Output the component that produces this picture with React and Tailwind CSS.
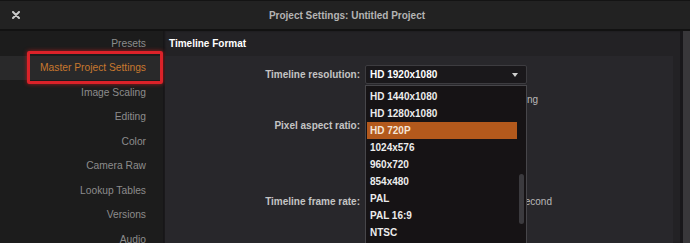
const sidebarItems = [
  'Presets',
  'Master Project Settings',
  'Image Scaling',
  'Editing',
  'Color',
  'Camera Raw',
  'Lookup Tables',
  'Versions',
  'Audio',
];

const resolutions = [
  'HD 1440x1080',
  'HD 1280x1080',
  'HD 720P',
  '1024x576',
  '960x720',
  '854x480',
  'PAL',
  'PAL 16:9',
  'NTSC',
];

const App = () => {
  const selected = 'HD 720P';

  return (
    <div className="w-[690px] h-[243px] overflow-hidden bg-[#1c1c1c] font-['Liberation_Sans',Arial,sans-serif] text-[10px] relative">
      {/* Title bar */}
      <div className="h-[31px] border-t border-[#141414] border-b-2 border-b-[#121212] bg-[#222222] flex items-center relative">
        <svg className="ml-[12px] w-[8px] h-[8px]" viewBox="0 0 8 8">
          <path d="M1 1 L7 7 M7 1 L1 7" stroke="#c9c9c9" strokeWidth="2" strokeLinecap="round" />
        </svg>
        <div className="absolute inset-x-0 pl-[4px] text-center font-bold text-[#b4b4b4]">Project Settings: Untitled Project</div>
      </div>

      <div className="flex h-[212px]">
        {/* Sidebar */}
        <div className="w-[163px] shrink-0 bg-[#1c1c1c] relative">
          {sidebarItems.map((item) => (
            <div
              key={item}
              className={`h-[24.5px] flex items-center justify-end pr-[17px] text-[10.25px] ${
                item === 'Master Project Settings' ? 'bg-[#29292a] text-[#c8782e]' : 'text-[#8c8c8c]'
              }`}
            >
              {item}
            </div>
          ))}
          <div className="absolute left-[27px] top-[20px] w-[136px] h-[33px] border-[3px] border-[#db2229] rounded-[2px] shadow-[0_0_4px_rgba(220,30,30,0.7)]" />
        </div>

        {/* Content */}
        <div className="flex-1 flex bg-[#232225] shadow-[inset_2px_0_2px_rgba(0,0,0,0.35)]">
          <div className="flex-1 flex flex-col">
            <div className="h-[25px] flex items-center pl-[6px] font-bold text-white shrink-0">Timeline Format</div>
            <div className="flex-1 bg-[#28272b] ml-[2px] mr-[7px] relative pt-[9px]">
              {/* Resolution row */}
              <div className="flex items-center h-[19px]">
                <div className="w-[200px] text-right pr-[5px] font-bold text-[#c4c4c4]">Timeline resolution:</div>
                <div className="w-[162px] h-[19px] bg-[#1a181b] border border-[#3d3c40] rounded-[2px] flex items-center justify-between pl-[4px] pr-[8px]">
                  <span className="font-bold text-white">HD 1920x1080</span>
                  <svg className="w-[6px] h-[4px]" viewBox="0 0 6 4">
                    <path d="M0 0 L6 0 L3 4 Z" fill="#cfcfcf" />
                  </svg>
                </div>
              </div>
              <div className="flex items-center h-[30px]">
                <div className="w-[200px]" />
                <div className="w-[173px] text-right text-[#b8b8b8]">1920 x 1080 processing</div>
              </div>
              {/* Pixel aspect row */}
              <div className="flex items-center h-[20px] mt-[1px]">
                <div className="w-[200px] text-right pr-[5px] font-bold text-[#c4c4c4]">Pixel aspect ratio:</div>
              </div>
              <div className="h-[55px]" />
              {/* Frame rate row */}
              <div className="flex items-center h-[20px] mt-[1px]">
                <div className="w-[200px] text-right pr-[5px] font-bold text-[#c4c4c4]">Timeline frame rate:</div>
                <div className="w-[187px] text-right text-[#b8b8b8]">frames per second</div>
              </div>

              {/* Dropdown list */}
              <div className="absolute left-[200px] top-[29px] w-[162px] h-[170px] bg-[#161315] border border-[#47464a] flex pt-[1.5px] pl-[1px]">
                <div className="flex-1 flex flex-col">
                  {resolutions.map((r) => (
                    <div
                      key={r}
                      className={`h-[17px] shrink-0 flex items-center pl-[3px] font-bold ${
                        r === selected ? 'bg-[#b3591c] text-[#f4e6d8]' : 'text-[#ececec]'
                      }`}
                    >
                      {r}
                    </div>
                  ))}
                </div>
                <div className="w-[9px] shrink-0 flex justify-center">
                  <div className="w-[5px] h-[50px] mt-[86px] rounded-full bg-[#3b3a3e]" />
                </div>
              </div>
            </div>
          </div>
          <div className="w-[3px] bg-[#18171a]" />
          <div className="w-[7px] bg-[#38373a]" />
        </div>
      </div>
    </div>
  );
};

export default App;
